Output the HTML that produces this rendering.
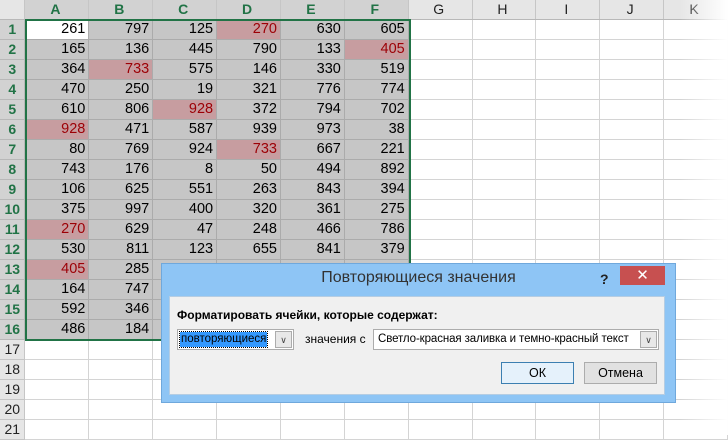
<!DOCTYPE html>
<html><head><meta charset="utf-8"><style>
body{margin:0;width:728px;height:435px;overflow:hidden;background:#fff;font-family:"Liberation Sans",Arial,sans-serif;position:relative}
table{border-collapse:collapse;table-layout:fixed;position:absolute;left:0;top:0}
td{height:19px;border-right:1px solid #d4d4d4;border-bottom:1px solid #d4d4d4;padding:0 3px 0 0;font-size:14.5px;text-align:right;overflow:hidden;white-space:nowrap;line-height:19px}
tr.h td{background:#e6e6e6;color:#222;text-align:center;font-size:14px;border-color:#c6c6c6;border-bottom:1px solid #b8b8b8}
tr.h td.s{background:#d2d2d2;color:#217346;font-weight:bold}
td.r{background:#d2d2d2;color:#217346;font-weight:bold;text-align:center;font-size:14px;border-color:#b8b8b8;padding:0}
td.r2{background:#e6e6e6;color:#222;text-align:center;font-size:14px;border-color:#c6c6c6;padding:0}
td.g{background:#c6c6c6;border-color:#ababab}
td.d{background:#c79da0;color:#9c0006;border-color:#ababab}
td.w{background:#fff;border-color:#ababab}
.sel{position:absolute;left:25px;top:19px;width:382px;height:318px;border:2px solid #217346}
.fade{position:absolute;left:680px;top:0;width:48px;height:435px;background:linear-gradient(to right,rgba(255,255,255,0),#fff)}
.dlg{position:absolute;left:161px;top:263px;width:515px;height:140px;background:#8ec5f5;border:1px solid #6fa8dc;box-sizing:border-box}
.title{position:absolute;left:0;width:100%;top:5px;text-align:center;font-size:16px;color:#333}
.q{position:absolute;left:438px;top:7px;font-size:14px;font-weight:bold;color:#222}
.x{position:absolute;left:458px;top:2px;width:45px;height:19px;background:#c75050;color:#fff;text-align:center;font-size:15px;line-height:19px}
.panel{position:absolute;left:7px;top:32px;width:496px;height:99px;background:#f0f0f0;border:1px solid #b5cde3;box-sizing:border-box}
.lbl{position:absolute;left:7px;top:11px;font-size:12px;font-weight:bold;color:#000}
.cb{position:absolute;top:32px;height:21px;border:1px solid #acacac;background:#fff;box-sizing:border-box;font-size:11.5px}
.arr{position:absolute;right:1px;top:1px;width:17px;height:17px;border:1px solid #acacac;background:#e8e8e8;box-sizing:border-box;font-size:9px;text-align:center;line-height:16px;color:#444}
.btn{position:absolute;top:98px;height:22px;border:1px solid #acacac;background:#e1e1e1;box-sizing:border-box;text-align:center;font-size:12.5px;line-height:20px}
</style></head><body>
<table>
<colgroup><col style="width:25px"><col style="width:64px"><col style="width:64px"><col style="width:64px"><col style="width:64px"><col style="width:64px"><col style="width:64px"><col style="width:64px"><col style="width:64px"><col style="width:64px"><col style="width:64px"><col style="width:64px"></colgroup>
<tr class="h"><td></td><td class="s">A</td><td class="s">B</td><td class="s">C</td><td class="s">D</td><td class="s">E</td><td class="s">F</td><td>G</td><td>H</td><td>I</td><td>J</td><td>K</td></tr>
<tr><td class="r">1</td><td class="w">261</td><td class="g">797</td><td class="g">125</td><td class="d">270</td><td class="g">630</td><td class="g">605</td><td></td><td></td><td></td><td></td><td></td></tr>
<tr><td class="r">2</td><td class="g">165</td><td class="g">136</td><td class="g">445</td><td class="g">790</td><td class="g">133</td><td class="d">405</td><td></td><td></td><td></td><td></td><td></td></tr>
<tr><td class="r">3</td><td class="g">364</td><td class="d">733</td><td class="g">575</td><td class="g">146</td><td class="g">330</td><td class="g">519</td><td></td><td></td><td></td><td></td><td></td></tr>
<tr><td class="r">4</td><td class="g">470</td><td class="g">250</td><td class="g">19</td><td class="g">321</td><td class="g">776</td><td class="g">774</td><td></td><td></td><td></td><td></td><td></td></tr>
<tr><td class="r">5</td><td class="g">610</td><td class="g">806</td><td class="d">928</td><td class="g">372</td><td class="g">794</td><td class="g">702</td><td></td><td></td><td></td><td></td><td></td></tr>
<tr><td class="r">6</td><td class="d">928</td><td class="g">471</td><td class="g">587</td><td class="g">939</td><td class="g">973</td><td class="g">38</td><td></td><td></td><td></td><td></td><td></td></tr>
<tr><td class="r">7</td><td class="g">80</td><td class="g">769</td><td class="g">924</td><td class="d">733</td><td class="g">667</td><td class="g">221</td><td></td><td></td><td></td><td></td><td></td></tr>
<tr><td class="r">8</td><td class="g">743</td><td class="g">176</td><td class="g">8</td><td class="g">50</td><td class="g">494</td><td class="g">892</td><td></td><td></td><td></td><td></td><td></td></tr>
<tr><td class="r">9</td><td class="g">106</td><td class="g">625</td><td class="g">551</td><td class="g">263</td><td class="g">843</td><td class="g">394</td><td></td><td></td><td></td><td></td><td></td></tr>
<tr><td class="r">10</td><td class="g">375</td><td class="g">997</td><td class="g">400</td><td class="g">320</td><td class="g">361</td><td class="g">275</td><td></td><td></td><td></td><td></td><td></td></tr>
<tr><td class="r">11</td><td class="d">270</td><td class="g">629</td><td class="g">47</td><td class="g">248</td><td class="g">466</td><td class="g">786</td><td></td><td></td><td></td><td></td><td></td></tr>
<tr><td class="r">12</td><td class="g">530</td><td class="g">811</td><td class="g">123</td><td class="g">655</td><td class="g">841</td><td class="g">379</td><td></td><td></td><td></td><td></td><td></td></tr>
<tr><td class="r">13</td><td class="d">405</td><td class="g">285</td><td class="g">512</td><td class="g">388</td><td class="g">217</td><td class="g">650</td><td></td><td></td><td></td><td></td><td></td></tr>
<tr><td class="r">14</td><td class="g">164</td><td class="g">747</td><td class="g">300</td><td class="g">415</td><td class="g">92</td><td class="g">548</td><td></td><td></td><td></td><td></td><td></td></tr>
<tr><td class="r">15</td><td class="g">592</td><td class="g">346</td><td class="g">611</td><td class="g">702</td><td class="g">128</td><td class="g">455</td><td></td><td></td><td></td><td></td><td></td></tr>
<tr><td class="r">16</td><td class="g">486</td><td class="g">184</td><td class="g">733</td><td class="g">60</td><td class="g">319</td><td class="g">871</td><td></td><td></td><td></td><td></td><td></td></tr>
<tr><td class="r2">17</td><td></td><td></td><td></td><td></td><td></td><td></td><td></td><td></td><td></td><td></td><td></td></tr>
<tr><td class="r2">18</td><td></td><td></td><td></td><td></td><td></td><td></td><td></td><td></td><td></td><td></td><td></td></tr>
<tr><td class="r2">19</td><td></td><td></td><td></td><td></td><td></td><td></td><td></td><td></td><td></td><td></td><td></td></tr>
<tr><td class="r2">20</td><td></td><td></td><td></td><td></td><td></td><td></td><td></td><td></td><td></td><td></td><td></td></tr>
<tr><td class="r2">21</td><td></td><td></td><td></td><td></td><td></td><td></td><td></td><td></td><td></td><td></td><td></td></tr>
</table>
<div class="sel"></div>
<div class="fade"></div>
<div class="dlg">
 <div class="title">Повторяющиеся значения</div>
 <div class="q">?</div>
 <div class="x">✕</div>
 <div class="panel">
  <div class="lbl">Форматировать ячейки, которые содержат:</div>
  <div class="cb" style="left:7px;width:117px"><span style="position:absolute;left:2px;top:2px;background:#3399ff;color:#000;padding:0 1px;line-height:15px;outline:1px dotted #000">повторяющиеся</span><div class="arr">&#8744;</div></div>
  <div style="position:absolute;left:135px;top:35px;font-size:12px">значения с</div>
  <div class="cb" style="left:203px;width:286px"><span style="position:absolute;left:4px;top:3px;letter-spacing:-0.1px">Светло-красная заливка и темно-красный текст</span><div class="arr">&#8744;</div></div>
 </div>
 <div class="btn" style="left:339px;width:73px;border-color:#3c7fb1;background:#e5f1fb">ОК</div>
 <div class="btn" style="left:422px;width:73px">Отмена</div>
</div>
</body></html>
